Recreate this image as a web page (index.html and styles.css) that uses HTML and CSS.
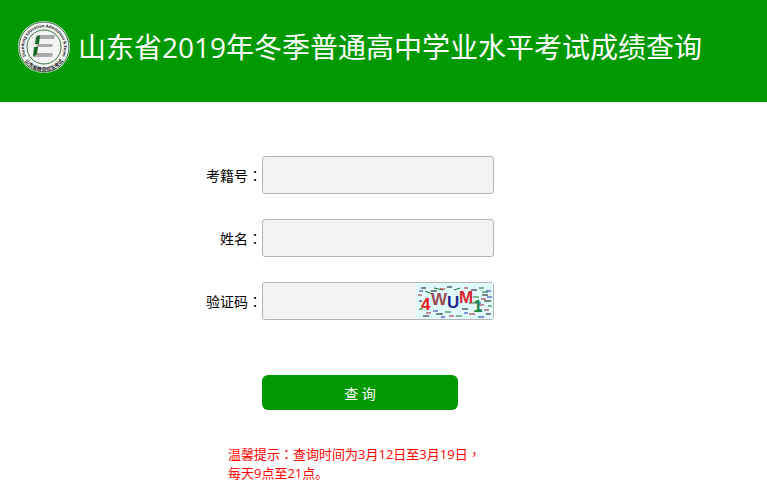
FILE: index.html
```
<!DOCTYPE html>
<html lang="zh-CN">
  <head>
    <meta charset="UTF-8" />
    <meta name="viewport" content="width=device-width, initial-scale=1.0" />
    <title>山东省2019年冬季普通高中学业水平考试成绩查询</title>
    <link rel="stylesheet" href="styles.css">
  </head>
  <body>
    <header class="header">
      <svg class="logo" viewBox="0 0 54 54" aria-hidden="true">
        <defs>
          <path id="ring-top" d="M9 36 A20 20 0 1 1 45 36" />
          <path id="ring-bottom" d="M5 35 A23 23 0 0 0 49 35" />
        </defs>
        <circle cx="27" cy="27" r="26" fill="#f2f4f2" />
        <circle cx="27" cy="27" r="25" fill="none" stroke="#44704a" stroke-width="1" />
        <circle cx="27" cy="27" r="17" fill="#f4f4f4" stroke="#3f6f45" stroke-width="1" />
        <text class="ring-text" text-anchor="middle"><textPath href="#ring-top" startOffset="50%">Shandong Education Admissions &amp; Exam</textPath></text>
        <text class="ring-text ring-cn" text-anchor="middle"><textPath href="#ring-bottom" startOffset="50%">山东省教育招生考试</textPath></text>
        <path d="M20 15h18l-1 4H19z M20 24h16l-1 3H19z M18 33h18l-1 4H17z" fill="#aaa" />
        <path d="M19 17l4 -2l-1 9h-4z M17 27h4l-1 7l-4 3z" fill="#156b20" />
      </svg>
      <h1>山东省2019年冬季普通高中学业水平考试成绩查询</h1>
    </header>

    <form class="query-form">
      <div class="row">
        <label for="examNo">考籍号<span class="punct" lang="zh-TW">：</span></label>
        <input type="text" id="examNo" name="examNo" />
      </div>
      <div class="row">
        <label for="name">姓名<span class="punct" lang="zh-TW">：</span></label>
        <input type="text" id="name" name="name" />
      </div>
      <div class="row">
        <label for="code">验证码<span class="punct" lang="zh-TW">：</span></label>
        <div class="code-box">
          <input type="text" id="code" name="code" />
          <svg class="captcha" viewBox="0 0 77 36" role="img" aria-label="验证码图片">
            <rect width="77" height="36" fill="#e0fafa" />
            <g class="noise">
              <path d="M5 5h5M15 8h6M31 4h5M55 7h6M66 12h6M3 18h3M46 26h6M61 27h5M70 31h5M20 31h7M7 33h6M68 18h7" stroke="#112" />
              <path d="M9 8l7 3M18 5l9 2M38 7l6 -2M63 5h5M57 14h6M3 26h4M29 29h6M40 33h6M72 23h4M53 20h5M66 9h6" stroke="#1a7030" />
              <path d="M24 6h5M48 5h4M65 16h5M10 30h5M33 33h5M53 31h6M68 27h5M2 12h4M62 22h6" stroke="#a82030" />
              <path d="M3 8h4M44 11h5M70 8h5M59 20h6M17 28h5M48 30h4M62 34h6M25 34h4M71 14h5" stroke="#2030a8" />
            </g>
            <g class="code-text">
              <text x="5" y="27" fill="#e81818">4</text>
              <text x="15" y="22" fill="#9b4b50">W</text>
              <text x="31" y="25" fill="#22268f">U</text>
              <text x="43" y="20" fill="#dc2530">M</text>
              <text x="57" y="29" fill="#1c8a3e">1</text>
            </g>
          </svg>
        </div>
      </div>
      <button type="submit" class="btn">查 询</button>
      <p class="tips">温馨提示<span class="punct" lang="zh-TW">：</span>查询时间为3月12日至3月19日<span class="punct" lang="zh-TW">，</span><br />每天9点至21点。</p>
    </form>
  </body>
</html>
```
FILE: styles.css
```
* {
  margin: 0;
  padding: 0;
  box-sizing: border-box;
}

body {
  background-color: #fff;
  color: #000;
  font-family: "Open Sans", "Noto Sans CJK SC", sans-serif;
  font-size: 14px;
}

.header {
  display: flex;
  align-items: center;
  gap: 7px;
  padding: 20px 17px 28px;
  background-color: #009900;
}

.logo {
  width: 54px;
  height: 54px;
  flex-shrink: 0;
}

.ring-text {
  font-size: 4px;
  font-weight: bold;
  fill: #222;
}

.ring-cn {
  font-size: 5px;
}

h1 {
  color: #fff;
  font-size: 28px;
  font-weight: normal;
  line-height: 40px;
}

.query-form {
  width: 355px;
  max-width: 100%;
  margin: 54px auto 0;
}

.row {
  display: flex;
  align-items: center;
  margin-bottom: 25px;
}

.row label {
  width: 56px;
  flex-shrink: 0;
  text-align: right;
}

/* colon and comma sit in the middle of the cell */
.punct {
  font-family: "Noto Sans CJK TC", sans-serif;
  line-height: 1;
}

.row input {
  width: 232px;
  height: 38px;
  padding: 0 8px;
  background-color: #f3f3f3;
  border: 1px solid #b5b5b5;
  border-radius: 3px;
  font-size: 14px;
}

.code-box {
  position: relative;
  display: flex;
}

.captcha {
  position: absolute;
  top: 1px;
  right: 1px;
  width: 77px;
  height: 36px;
}

.code-text {
  font-family: "Liberation Sans", sans-serif;
  font-size: 17px;
  font-weight: bold;
}

.noise {
  stroke-width: 1;
}

.btn {
  display: block;
  width: 196px;
  height: 35px;
  margin: 55px 0 0 56px;
  background-color: #009900;
  border: none;
  border-radius: 6px;
  color: #fff;
  font-family: inherit;
  font-size: 14px;
  cursor: pointer;
}

.tips {
  margin: 35px 0 0 22px;
  color: #f00;
  font-size: 13px;
  line-height: 19px;
}
```
